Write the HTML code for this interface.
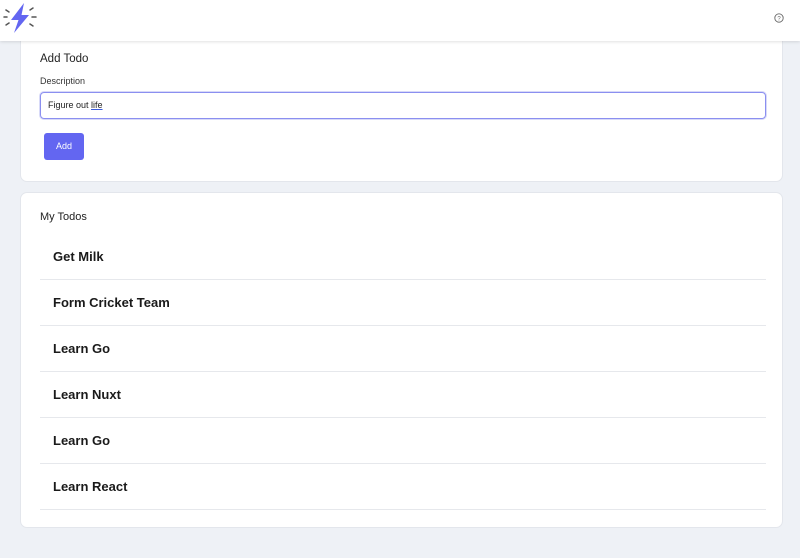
<!DOCTYPE html>
<html><head><style>
body{margin:0;width:800px;height:558px;background:#eef1f6;font-family:"Liberation Sans",sans-serif;position:relative;overflow:hidden;color:#222}
.hdr{position:absolute;left:0;top:0;width:800px;height:41px;background:#fff;box-shadow:0 1px 3px rgba(0,0,0,.12);z-index:2}
.card{position:absolute;left:20px;width:763px;background:#fff;border:1px solid #e3e6ec;border-radius:7px;box-sizing:border-box}
.t{position:absolute;left:19px;font-size:11px;color:#222}
.item{position:absolute;left:19px;width:726px;height:46px;border-bottom:1px solid #e6e8ec;box-sizing:border-box}
.item span{position:absolute;left:13px;top:15px;font-size:13px;font-weight:bold;color:#1a1a1a}
</style></head><body>
<div class="hdr">
<svg style="position:absolute;left:2px;top:3px" width="36" height="30" viewBox="0 0 36 30">
<path d="M22 0 L9 17 H16.5 L12 30 L27 12 H19.5 Z" fill="#6366f1"/>
<g stroke="#555" stroke-width="1.5" stroke-linecap="round"><line x1="2" y1="14" x2="5" y2="14"/><line x1="30" y1="14" x2="34" y2="14"/><line x1="4" y1="7" x2="7" y2="9"/><line x1="4" y1="22" x2="7" y2="20"/><line x1="28" y1="7" x2="31" y2="5"/><line x1="28" y1="21" x2="31" y2="23"/></g>
</svg>
<svg style="position:absolute;left:774px;top:13px" width="10" height="10" viewBox="0 0 10 10"><circle cx="5" cy="5" r="4.2" fill="none" stroke="#666" stroke-width="0.9"/><text x="5" y="7.5" font-size="6" text-anchor="middle" fill="#666" font-family="Liberation Sans">?</text></svg>
</div>
<div class="card" style="top:20px;height:162px">
<div class="t" style="top:32px;font-size:11.5px">Add Todo</div>
<div class="t" style="top:55px;font-size:9px;color:#333">Description</div>
<div style="position:absolute;left:19px;top:71px;width:726px;height:27px;border:1.5px solid #8b8ff0;border-radius:4px;box-sizing:border-box;box-shadow:0 0 0 1px #d8daf8"><span style="position:absolute;left:7px;top:7px;font-size:9px;color:#222">Figure out <span style="text-decoration:underline;text-decoration-color:#3b5bdb">life</span></span></div>
<div style="position:absolute;left:23px;top:112px;width:40px;height:27px;background:#6366f1;border-radius:3px;color:#fff;font-size:9px;text-align:center;line-height:27px">Add</div>
</div>
<div class="card" style="top:192px;height:336px">
<div class="t" style="top:18px">My Todos</div>
<div class="item" style="top:41px"><span>Get Milk</span></div>
<div class="item" style="top:87px"><span>Form Cricket Team</span></div>
<div class="item" style="top:133px"><span>Learn Go</span></div>
<div class="item" style="top:179px"><span>Learn Nuxt</span></div>
<div class="item" style="top:225px"><span>Learn Go</span></div>
<div class="item" style="top:271px"><span>Learn React</span></div>
</div>
</body></html>
